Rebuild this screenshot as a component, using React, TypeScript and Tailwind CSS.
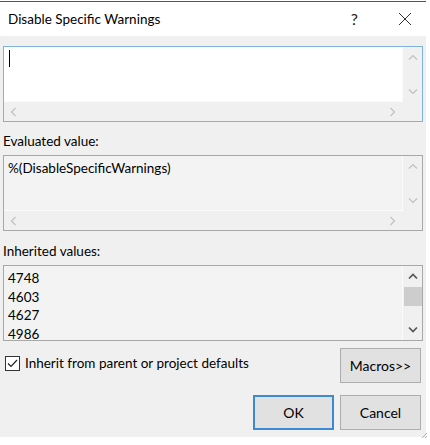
import type { ReactNode } from 'react'

const font = { fontFamily: 'Lato, "Noto Sans", sans-serif' }

const Chevron = ({ dir, dark }: { dir: 'up' | 'down' | 'left' | 'right'; dark?: boolean }) => {
    const pts = {
        up: '1,6.5 5,2.5 9,6.5',
        down: '1,2.5 5,6.5 9,2.5',
        left: '6.5,1 2.5,5 6.5,9',
        right: '3.5,1 7.5,5 3.5,9',
    }[dir]
    return (
        <svg width="10" height="10" viewBox="0 0 10 10">
            <polyline
                points={pts}
                fill="none"
                stroke={dark ? '#555555' : '#c0c0c0'}
                strokeWidth={dark ? 1.7 : 1.2}
            />
        </svg>
    )
}

const TextBox = ({ focused, bg, children }: { focused?: boolean; bg: string; children?: ReactNode }) => (
    <div
        className={`flex h-[76px] flex-col border ${focused ? 'border-[#7fb4e2]' : 'border-[#a8a8a8]'}`}
    >
        <div className="flex flex-1">
            <div className={`flex-1 ${bg} border-r border-b border-[#fbfbfb] px-[4px] pt-[1px]`}>{children}</div>
            <div className="flex w-[19px] flex-col items-center justify-between bg-[#f0f0f0] pt-[6px] pb-[5px]">
                <Chevron dir="up" />
                <Chevron dir="down" />
            </div>
        </div>
        <div className="flex h-[19px] items-center justify-between bg-[#f0f0f0] pr-[25px] pl-[5px]">
            <Chevron dir="left" />
            <Chevron dir="right" />
        </div>
    </div>
)

const Button = ({ label, primary }: { label: string; primary?: boolean }) => (
    <div
        className={`flex h-[35px] w-[81px] items-center justify-center bg-[#e1e1e1] text-[14px] font-normal text-black ${
            primary ? 'border-2 border-[#3c8ad5]' : 'border border-[#adadad]'
        }`}
    >
        {label}
    </div>
)

export default function App() {
    return (
        <div className="relative h-[445px] w-[430px] bg-white pt-[1px]" style={font}>
            <div className="flex h-[436px] w-[426px] flex-col border-t border-[#555555]">
                <div className="flex h-[34px] items-center bg-white pl-[8px] pr-[14px] text-[13.5px] text-black">
                    <span className="flex-1 pt-[1px]">Disable Specific Warnings</span>
                    <span className="mr-[40px] text-[16px] text-[#222]">?</span>
                    <svg width="14" height="14" viewBox="0 0 14 14">
                        <path d="M1 1 L13 13 M13 1 L1 13" stroke="#333" strokeWidth="1" />
                    </svg>
                </div>
                <div className="flex flex-1 flex-col bg-[#f0f0f0] pt-[10px] pl-[3px] pr-[3px] text-[13.5px] text-black">
                    <TextBox focused bg="bg-white">
                        <div className="mt-[2px] ml-[1px] h-[17px] w-[1px] bg-black" />
                    </TextBox>
                    <div className="h-[33px] pt-[10px] leading-[19px]">Evaluated value:</div>
                    <TextBox bg="bg-[#f3f3f3]">
                        <div className="leading-[22px]">%(DisableSpecificWarnings)</div>
                    </TextBox>
                    <div className="h-[34px] pt-[11px] leading-[19px]">Inherited values:</div>
                    <div className="flex h-[76px] border border-[#a8a8a8]">
                        <div className="flex-1 overflow-hidden border-r border-[#fbfbfb] bg-[#f3f3f3] px-[4px] leading-[18.5px]">
                            <div className="pt-[3px]">4748</div>
                            <div>4603</div>
                            <div>4627</div>
                            <div>4986</div>
                        </div>
                        <div className="flex w-[19px] flex-col items-center bg-[#f0f0f0]">
                            <div className="flex h-[21px] items-center">
                                <Chevron dir="up" dark />
                            </div>
                            <div className="h-[19px] w-[18px] bg-[#cdcdcd]" />
                            <div className="flex flex-1 items-end pb-[5px]">
                                <Chevron dir="down" dark />
                            </div>
                        </div>
                    </div>
                    <div className="mt-[7px] flex items-start justify-between pr-[2px]">
                        <label className="flex items-center gap-[5px] pt-[5px] pl-[2px]">
                            <span className="flex h-[15px] w-[15px] items-center justify-center border border-[#333] bg-white">
                                <svg width="11" height="11" viewBox="0 0 11 11">
                                    <polyline points="1,5.5 4,8.5 10,2" fill="none" stroke="#222" strokeWidth="1.2" />
                                </svg>
                            </span>
                            Inherit from parent or project defaults
                        </label>
                        <Button label="Macros>>" />
                    </div>
                    <div className="mt-[12px] flex justify-end gap-[6px] pr-[2px]">
                        <Button label="OK" primary />
                        <Button label="Cancel" />
                    </div>
                </div>
            </div>
            <svg className="absolute top-[432px] left-[421px]" width="7" height="7" viewBox="0 0 7 7">
                <path d="M6 1 L1 6 M6 4 L4 6" stroke="#b0b0b0" strokeWidth="1" />
            </svg>
        </div>
    )
}
